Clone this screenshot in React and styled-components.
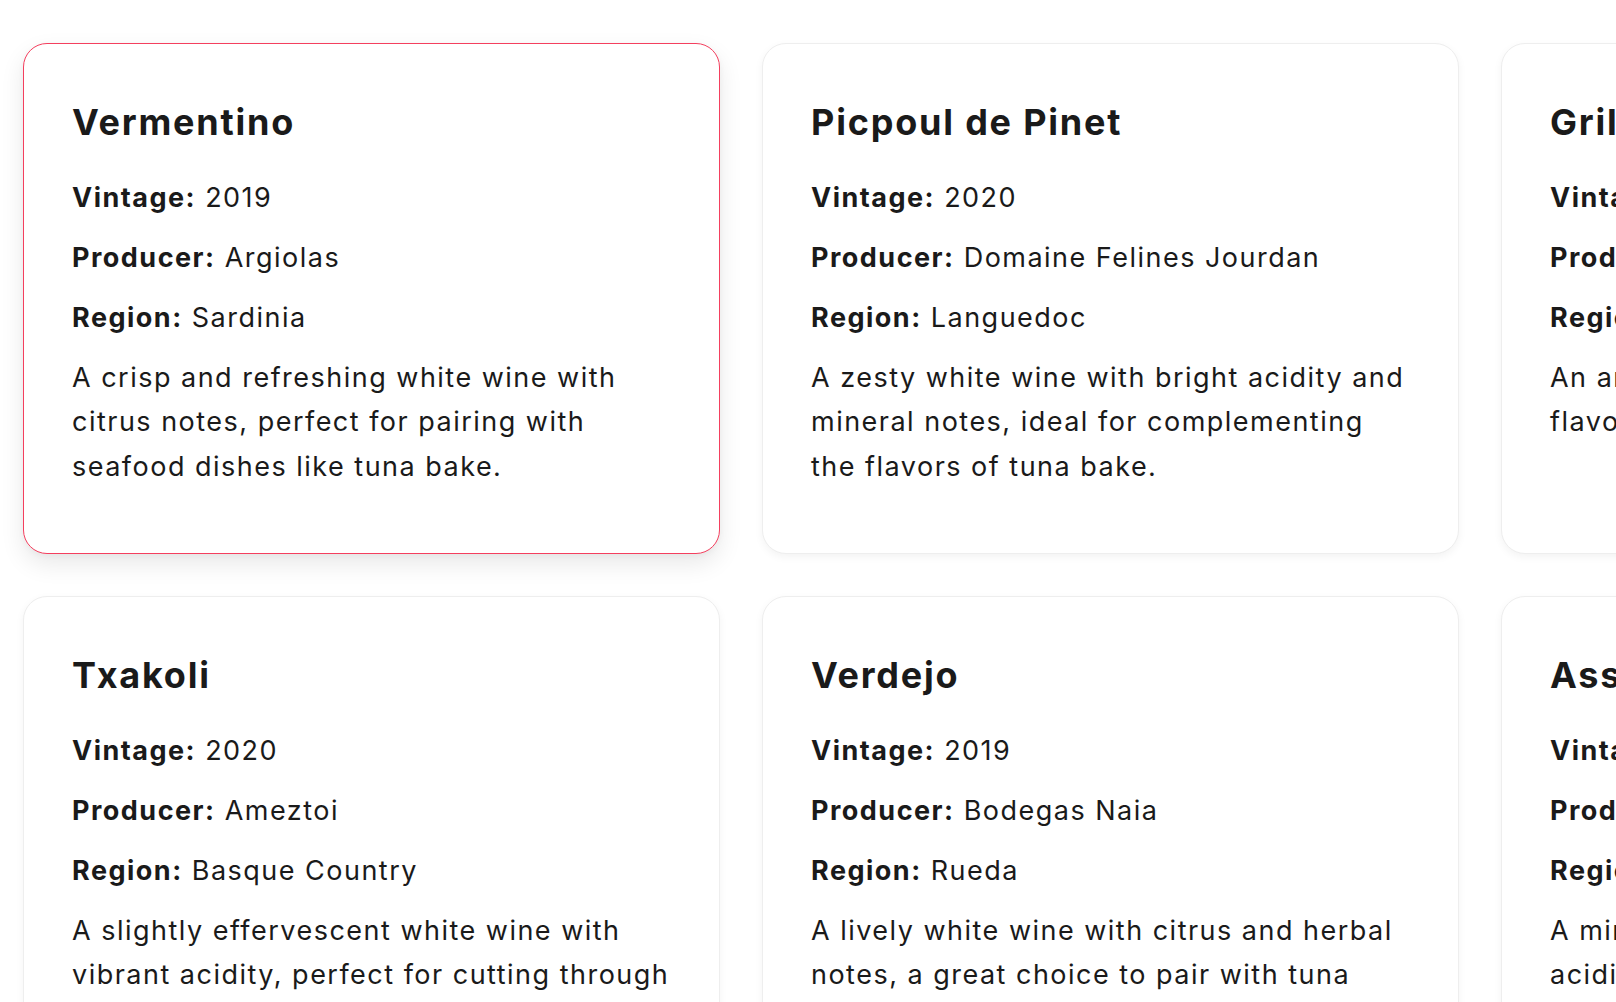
import React from "react";
import styled, { createGlobalStyle } from "styled-components";

const GlobalStyle = createGlobalStyle`
  html, body {
    margin: 0;
    padding: 0;
    overflow: hidden;
    background: #ffffff;
  }

  body {
    font-family: Inter, "Noto Sans", sans-serif;
    color: #1a1a1a;
  }

  *, *::before, *::after {
    box-sizing: border-box;
  }
`;

const Page = styled.main`
  width: 100%;
  height: 1002px;
  overflow: hidden;
  padding: 43px 23px;
`;

const Grid = styled.div`
  display: grid;
  grid-template-columns: repeat(3, 697px);
  gap: 42px;
`;

const Card = styled.article`
  background: #ffffff;
  border-radius: 24px;
  padding: 49px 48px 48px;
  border: ${({ $active }) => ($active ? "1.75px solid #f43f5e" : "1.5px solid #eeeeee")};
  box-shadow: ${({ $active }) =>
    $active
      ? "0 10px 24px rgba(0, 0, 0, 0.09), 0 2px 6px rgba(0, 0, 0, 0.04)"
      : "0 3px 8px rgba(0, 0, 0, 0.05)"};
  font-size: 27px;
  line-height: 1.635;
  letter-spacing: 0.055em;
`;

const Title = styled.h2`
  margin: 0 0 24px;
  font-size: 36px;
  font-weight: 700;
  letter-spacing: 0.05em;
  color: #1a1a1a;
  white-space: nowrap;
`;

const Field = styled.p`
  margin: 0 0 16px;
  white-space: nowrap;

  strong {
    font-weight: 700;
  }
`;

const Description = styled.p`
  margin: 0 0 16px;
`;

const wines = [
  {
    name: "Vermentino",
    vintage: 2019,
    producer: "Argiolas",
    region: "Sardinia",
    notes:
      "A crisp and refreshing white wine with citrus notes, perfect for pairing with seafood dishes like tuna bake.",
  },
  {
    name: "Picpoul de Pinet",
    vintage: 2020,
    producer: "Domaine Felines Jourdan",
    region: "Languedoc",
    notes:
      "A zesty white wine with bright acidity and mineral notes, ideal for complementing the flavors of tuna bake.",
  },
  {
    name: "Grillo",
    vintage: 2019,
    producer: "Donnafugata",
    region: "Sicily",
    notes:
      "An aromatic white wine with tropical fruit flavors, a lovely match for tuna bake.",
  },
  {
    name: "Txakoli",
    vintage: 2020,
    producer: "Ameztoi",
    region: "Basque Country",
    notes:
      "A slightly effervescent white wine with vibrant acidity, perfect for cutting through the richness of tuna bake.",
  },
  {
    name: "Verdejo",
    vintage: 2019,
    producer: "Bodegas Naia",
    region: "Rueda",
    notes:
      "A lively white wine with citrus and herbal notes, a great choice to pair with tuna bake.",
  },
  {
    name: "Assyrtiko",
    vintage: 2019,
    producer: "Domaine Sigalas",
    region: "Santorini",
    notes:
      "A mineral-driven white wine with high acidity, a refreshing partner for tuna bake.",
  },
];

const WineCard = ({ wine, active }) => (
  <Card $active={active}>
    <Title>{wine.name}</Title>
    <Field>
      <strong>Vintage:</strong> {wine.vintage}
    </Field>
    <Field>
      <strong>Producer:</strong> {wine.producer}
    </Field>
    <Field>
      <strong>Region:</strong> {wine.region}
    </Field>
    <Description>{wine.notes}</Description>
  </Card>
);

const App = () => {
  return (
    <Page>
      <GlobalStyle />
      <Grid>
        {wines.map((wine, index) => (
          <WineCard key={wine.name} wine={wine} active={index === 0} />
        ))}
      </Grid>
    </Page>
  );
};

export default App;
